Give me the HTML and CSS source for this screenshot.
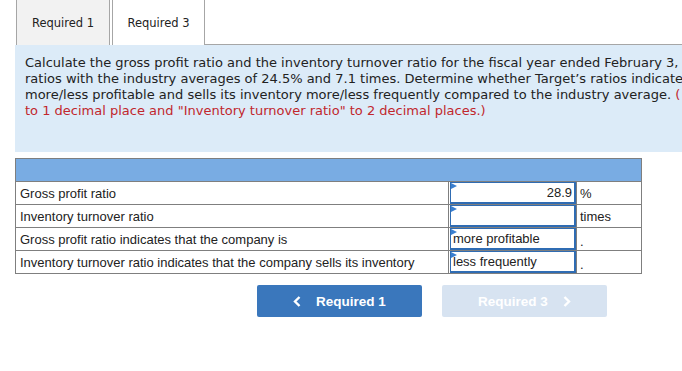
FILE: index.html
```html
<!DOCTYPE html>
<html lang="en">
<head>
  <meta charset="UTF-8" />
  <title>Required 3</title>
  <link rel="stylesheet" href="styles.css">
</head>
<body>
  <div class="tabs">
    <div class="tab">Required 1</div>
    <div class="tab active">Required 3</div>
    <div class="tab-fill"></div>
  </div>
  <div class="prompt">
    <p>Calculate the gross profit ratio and the inventory turnover ratio for the fiscal year ended February 3,<br>
    ratios with the industry averages of 24.5% and 7.1 times. Determine whether Target’s ratios indicate<br>
    more/less profitable and sells its inventory more/less frequently compared to the industry average. <span class="red">(</span><br>
    <span class="red">to 1 decimal place and "Inventory turnover ratio" to 2 decimal places.)</span></p>
  </div>

  <table class="grid">
    <tr class="head"><td colspan="3"></td></tr>
    <tr>
      <td class="label">Gross profit ratio</td>
      <td class="entry"><div class="box num">28.9</div></td>
      <td class="unit">%</td>
    </tr>
    <tr>
      <td class="label">Inventory turnover ratio</td>
      <td class="entry"><div class="box num"></div></td>
      <td class="unit">times</td>
    </tr>
    <tr>
      <td class="label">Gross profit ratio indicates that the company is</td>
      <td class="entry"><div class="box">more profitable</div></td>
      <td class="unit dot">.</td>
    </tr>
    <tr>
      <td class="label">Inventory turnover ratio indicates that the company sells its inventory</td>
      <td class="entry"><div class="box">less frequently</div></td>
      <td class="unit dot">.</td>
    </tr>
  </table>

  <div class="nav">
    <button class="nav-btn prev">
      <svg class="chev" width="8" height="11" viewBox="0 0 8 11"><path d="M6.5 1 L2 5.5 L6.5 10" fill="none" stroke="#fff" stroke-width="2.4"/></svg>
      Required 1
    </button>
    <button class="nav-btn next">
      Required 3
      <svg class="chev" width="8" height="11" viewBox="0 0 8 11"><path d="M1.5 1 L6 5.5 L1.5 10" fill="none" stroke="#fff" stroke-width="2.4"/></svg>
    </button>
  </div>
</body>
</html>
```

FILE: styles.css
```css
body {
  margin: 0;
  width: 682px;
  overflow: hidden;
  background: #fff;
  color: #222;
  font-family: "DejaVu Sans", Verdana, sans-serif;
}
.tabs {
  display: flex;
  height: 45px;
  padding-left: 16px;
}
.tab {
  width: 94px;
  border: 1px solid #a6a6a6;
  border-top: none;
  border-bottom: none;
  background: #f2f2f2;
  font-size: 11.5px;
  color: #222;
  display: flex;
  align-items: center;
  justify-content: center;
  padding-top: 1px;
  box-sizing: border-box;
}
.tab.active {
  background: #fff;
  margin-left: 2px;
  width: 93px;
}
.tab-fill {
  flex: 1;
  border-bottom: 1px solid #a6a6a6;
}
.prompt {
  margin-left: 15px;
  height: 107px;
  background: #dcebf8;
  padding: 10px 0 0 10px;
  box-sizing: border-box;
  overflow: hidden;
}
.prompt p {
  margin: 0;
  font-size: 13px;
  line-height: 16px;
  white-space: nowrap;
}
.red {
  color: #c1272d;
}
.grid {
  margin: 6px 0 0 15px;
  width: 627px;
  border-collapse: collapse;
  font-family: "Liberation Sans", Arial, sans-serif;
  font-size: 13px;
  color: #222;
}
.grid td {
  border: 1px solid #7f7f7f;
  height: 22px;
  padding: 0;
}
.head td {
  background: #79ace3;
}
.label {
  width: 428px;
  padding-left: 4px !important;
}
.entry {
  width: 127px;
}
.box {
  height: 19px;
  margin: 0 0 0 1px;
  border: 1px solid #2f6cb3;
  border-width: 1px 2px 2px 1px;
  line-height: 19px;
  padding: 0 2px;
  background: #fff;
  position: relative;
}
.box::before {
  content: "";
  position: absolute;
  left: 0;
  top: 0;
  border-left: 6px solid #3a7fd0;
  border-top: 3px solid transparent;
  border-bottom: 3px solid transparent;
}
.num {
  text-align: right;
}
.unit {
  padding-left: 3px !important;
}
.dot {
  vertical-align: bottom;
  line-height: 16px;
}
.nav {
  display: flex;
  gap: 20px;
  margin: 11px 0 0 257px;
}
.nav-btn {
  width: 165px;
  height: 32px;
  border: none;
  border-radius: 2px;
  font-family: "Liberation Sans", Arial, sans-serif;
  font-size: 13.5px;
  font-weight: bold;
  color: #fff;
  display: flex;
  align-items: center;
  justify-content: center;
  gap: 15px;
  padding: 0;
}
.prev {
  background: #3a77bc;
}
.next {
  background: #d7e3f1;
}
.chev {
  display: block;
}
```
